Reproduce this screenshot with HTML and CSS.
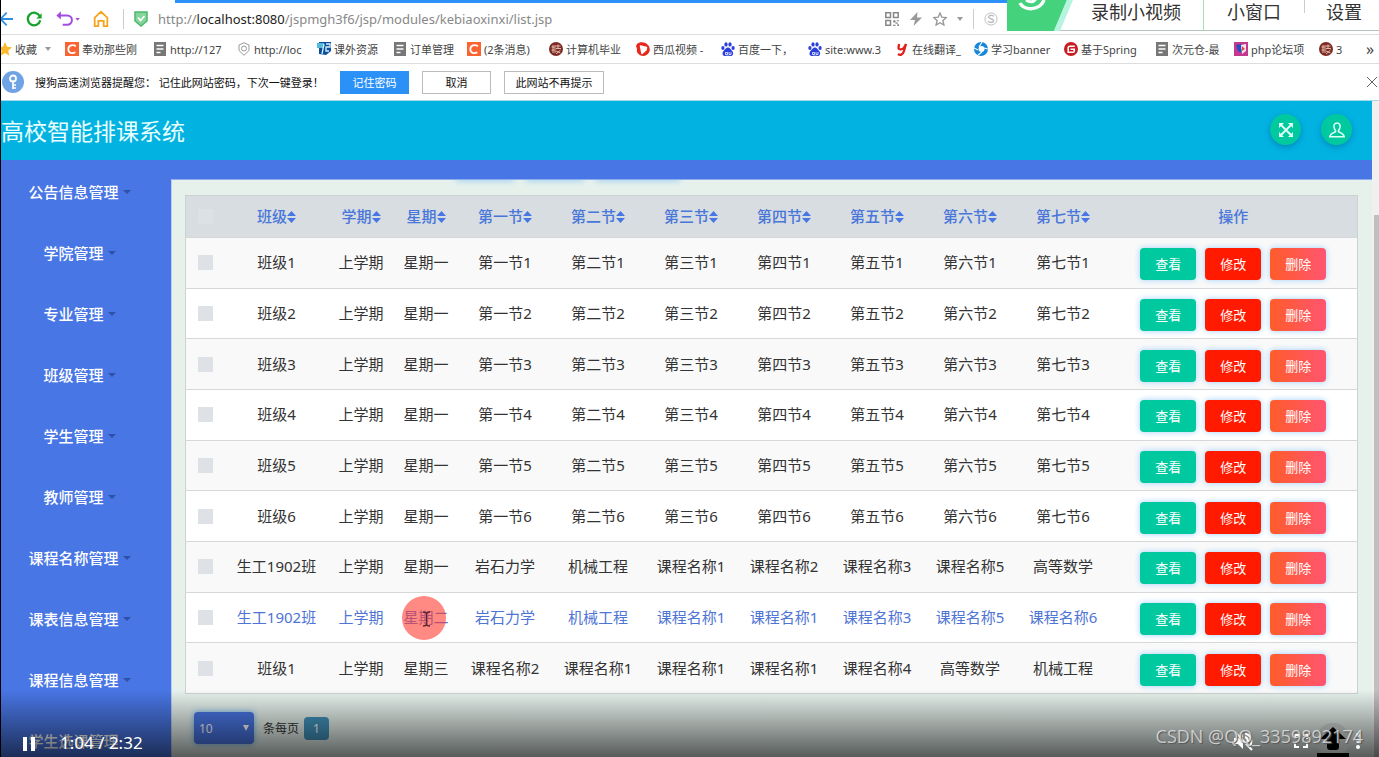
FILE: index.html
```html
<!DOCTYPE html>
<html lang="zh-CN">
<head>
<meta charset="utf-8">
<title>高校智能排课系统</title>
<link rel="stylesheet" href="styles.css">
</head>
<body>
<svg class="defs" aria-hidden="true">
  <symbol id="doc" viewBox="0 0 12 14"><path d="M0 0h12v14H0z" fill="#777"/><path d="M2.500 3.500h7M2.500 7h7M2.500 10.500h4" stroke="#fff" stroke-width="1.300"/></symbol>
  <symbol id="csdn" viewBox="0 0 14 14"><path d="M0 0h14v14H0z" fill="#fa6432"/><path d="M10.800 4.200C8 1.900 3.300 3.300 3.300 7.300c0 3.700 4 4.700 7 2.900" fill="none" stroke="#fff" stroke-width="1.800"/></symbol>
  <symbol id="seal" viewBox="0 0 14 14"><circle cx="7" cy="7" r="7" fill="#7d2a22"/><path d="M2.500 5h3M4 3v8M2.500 8h3M7 4h4.500M9 2.500v4M7 6.500h5M7 9l4.500 2M11.500 8L7 12M6 3v8" stroke="#ecc9bd" stroke-width=".9" fill="none"/></symbol>
  <symbol id="paw" viewBox="0 0 14 14"><g fill="#2a3fdc"><ellipse cx="1.900" cy="6" rx="1.600" ry="2"/><ellipse cx="5" cy="2.400" rx="1.600" ry="2.200"/><ellipse cx="9" cy="2.400" rx="1.600" ry="2.200"/><ellipse cx="12.100" cy="6" rx="1.600" ry="2"/><path d="M7 5.500c2 0 2.700 2 4 3.300 2.200 2.300 1 5.200-1.500 5.200-1.500 0-3.500-.4-5 0-3 .3-3.900-3-2-5C4 7.500 5 5.500 7 5.500z"/></g><path d="M4.500 10.500h2v2h-2zM8 10v2.500h2V10" fill="none" stroke="#fff" stroke-width=".8"/></symbol>
  <symbol id="sort" viewBox="0 0 9 12"><path d="M4.500 0L9 5H0zM4.500 12L0 7h9z" fill="#4976e5"/></symbol>
</svg>

<div class="screen">
  <header class="browser">
    <div class="tab-line"></div>
    <div class="address">
      <svg class="ico" viewBox="0 0 20 20"><path d="M20 10H6M13 3l-7 7 7 7" fill="none" stroke="#2b8fe8" stroke-width="2"/></svg>
      <svg class="ico" viewBox="0 0 20 20"><path d="M16.500 7A7 7 0 1 0 17 11.500" fill="none" stroke="#16a32b" stroke-width="2.500"/><path d="M18.500 3.500v6h-6z" fill="#16a32b"/></svg>
      <svg class="ico undo" viewBox="0 0 28 20"><path d="M3 6h9a4.500 4.500 0 0 1 0 10.500H7" fill="none" stroke="#a34be0" stroke-width="2.200"/><path d="M0 6l5-4.500v9z" fill="#a34be0"/><path d="M21 9h5l-2.500 3z" fill="#a34be0"/></svg>
      <svg class="ico" viewBox="0 0 20 20"><path d="M3 8.500L10 2l7 6.500V18h-4v-6H7v6H3z" fill="none" stroke="#f7a41d" stroke-width="2"/></svg>
      <i class="rule"></i>
      <svg class="ico small" viewBox="0 0 14 16"><path d="M1 1h12v9l-6 5-6-5z" fill="#84d59b" stroke="#4cb96a" stroke-width="1.500"/><path d="M4 6.500l2.500 3 4-4.500" fill="none" stroke="#fff" stroke-width="1.700"/></svg>
      <span class="url">http://<b>localhost:8080</b>/jspmgh3f6/jsp/modules/kebiaoxinxi/list.jsp</span>
      <div class="tools">
        <svg viewBox="0 0 12 12"><g fill="none" stroke="#888" stroke-width="1.300"><path d="M.7.7h4v4h-4zM7.300.7h4v4h-4zM.7 7.300h4v4h-4z"/></g><path d="M7 7h2v2H7zM10 7h2v1h-2zM9 9h2v1H9zM7 11h2v1H7zM10.500 10.500H12V12h-1.500z" fill="#888"/></svg>
        <svg viewBox="0 0 12 14"><path d="M7.500 0L0 8h5l-1.500 6L12 5.500H7z" fill="#999"/></svg>
        <svg viewBox="0 0 14 14"><path d="M7 1l1.800 4.200 4.500.4-3.400 3 1 4.400L7 10.700 3.100 13l1-4.400-3.400-3 4.500-.4z" fill="none" stroke="#999" stroke-width="1.400"/></svg>
        <i class="tri"></i><i class="rule"></i>
        <svg viewBox="0 0 15 15"><circle cx="7.500" cy="7.500" r="6.500" fill="none" stroke="#bbb"/><path d="M10.500 4.500C8.500 3 4.500 3.500 5 5.800c.4 1.800 5.200 1.200 5.300 3.500.1 2-4 2.400-6 .7" fill="none" stroke="#bbb" stroke-width="1.500"/></svg>
        <span>揭秘</span>
      </div>
    </div>
    <nav class="bookmarks">
      <a href="#"><svg viewBox="2 0 11 14"><path d="M6 0l2 4.700 5 .5-3.800 3.500 1.200 5L6 11l-4.400 2.700 1.200-5L-1 5.200l5-.5z" fill="#fdb92c"/></svg>收藏<i class="tri"></i></a>
      <a href="#"><svg><use href="#csdn"/></svg>奉劝那些刚</a>
      <a href="#"><svg><use href="#doc"/></svg>http://127</a>
      <a href="#"><svg viewBox="0 0 14 14"><path d="M7 .7l5 2.300v5.500L7 13.300 2 8.500V3z" fill="none" stroke="#999"/><circle cx="7" cy="6.500" r="2.500" fill="none" stroke="#999"/></svg>http://loc</a>
      <a href="#"><svg viewBox="0 0 14 14"><path d="M2 0h12v9l-5 4-7-1z" fill="#0b4f9b"/><path d="M0 1h7v5H0z" fill="#55b8df"/><path d="M7 2L5 12M9 2h4v3H9v4h3" stroke="#d8f2ff" stroke-width="1.300" fill="none"/></svg>课外资源</a>
      <a href="#"><svg><use href="#doc"/></svg>订单管理</a>
      <a href="#"><svg><use href="#csdn"/></svg>(2条消息)</a>
      <a href="#"><svg><use href="#seal"/></svg>计算机毕业</a>
      <a href="#"><svg viewBox="0 0 14 14"><path d="M1 2c3-3 9-2 11.500 1.500 3 4.500.5 10-5 10.500C2.500 14 0 10 1 7L0 4z" fill="#e8261c"/><path d="M4.500 4l6 1.500-.5 2.500-4 3.500z" fill="#fff" stroke="#fff" stroke-width="1.500" stroke-linejoin="round"/></svg>西瓜视频 -</a>
      <a href="#"><svg><use href="#paw"/></svg>百度一下，</a>
      <a href="#"><svg><use href="#paw"/></svg>site:www.3</a>
      <a href="#"><svg viewBox="0 0 14 14"><path d="M4 2L3.500 6c0 2 4 2 5.500-.5L11 2 9 9c-1 4-4 4.500-6 3" fill="none" stroke="#e0221b" stroke-width="2.300"/></svg>在线翻译_</a>
      <a href="#"><svg viewBox="0 0 14 14"><circle cx="7" cy="7" r="7" fill="#1687d9"/><circle cx="7.500" cy="7" r="3" fill="#fff"/><path d="M5 5L8 0M10 6l4 1M8 10l-4 3M4 8L0 6" stroke="#fff" stroke-width="1.100"/></svg>学习banner</a>
      <a href="#"><svg viewBox="0 0 14 14"><circle cx="7" cy="7" r="7" fill="#c71d23"/><path d="M10.800 4.200H6Q4.200 4.200 4.200 6v4.200H9q1.300 0 1.300-1.300V7.200H6.500" fill="none" stroke="#fff" stroke-width="1.600"/></svg>基于Spring</a>
      <a href="#"><svg><use href="#doc"/></svg>次元仓-最</a>
      <a href="#"><svg viewBox="0 0 14 14"><path d="M0 0h14v14H0z" fill="#c53890"/><path d="M2 3l5-1 1 9-4-2z" fill="#244ec4"/><path d="M7 3l5-1v7l-4 3z" fill="#f5e7f0"/><path d="M8 4l3 3-3 2z" fill="#e34a3a"/></svg>php论坛项</a>
      <a href="#"><svg><use href="#seal"/></svg>3</a>
      <a href="#" class="more">»</a>
    </nav>
    <div class="prompt">
      <svg class="key" viewBox="0 0 22 22"><circle cx="11" cy="11" r="11" fill="#6fa3e6"/><circle cx="11" cy="7.500" r="3" fill="none" stroke="#fff" stroke-width="1.800"/><path d="M11 10.500V18M11 14h3M11 17h3" stroke="#fff" stroke-width="1.700"/></svg>
      <span class="msg">搜狗高速浏览器提醒您： 记住此网站密码，下次一键登录！</span>
      <button class="primary">记住密码</button>
      <button>取消</button>
      <button class="wide">此网站不再提示</button>
      <button class="close" aria-label="关闭"><svg viewBox="0 0 10 10"><path d="M0 0l10 10M10 0L0 10" stroke="#666"/></svg></button>
    </div>
  </header>

  <div class="viewport">
    <div class="site">
      <header class="top">
        <h1>高校智能排课系统</h1>
        <button class="round" aria-label="全屏"><svg viewBox="0 0 16 16"><path d="M2 2l12 12M14 2L2 14" stroke="#e2fff6" stroke-width="1.800"/><path d="M1 6V1h5zM10 1h5v5zM15 10v5h-5zM6 15H1v-5z" fill="#e2fff6"/></svg></button>
        <button class="round" aria-label="用户"><svg viewBox="0 0 16 16"><path d="M8 1C5.500 1 4.700 3 5 5.200c.2 1.500.8 2.500 1.500 3.300v1.300C4 11 1.200 11.500.8 14.700h14.400C14.800 11.500 12 11 9.500 9.800V8.500C10.200 7.700 10.800 6.700 11 5.200 11.300 3 10.500 1 8 1z" fill="none" stroke="#e2fff6" stroke-width="1.500"/></svg></button>
      </header>
      <div class="body">
        <nav class="side">
          <a href="#">公告信息管理<i></i></a>
          <a href="#">学院管理<i></i></a>
          <a href="#">专业管理<i></i></a>
          <a href="#">班级管理<i></i></a>
          <a href="#">学生管理<i></i></a>
          <a href="#">教师管理<i></i></a>
          <a href="#">课程名称管理<i></i></a>
          <a href="#">课表信息管理<i></i></a>
          <a href="#">课程信息管理<i></i></a>
          <a href="#">学生选课管理<i></i></a>
        </nav>
        <main class="content">
          <div class="glow"><i></i><i></i><i></i></div>
          <table>
            <colgroup><col class="c-check"><col class="c-class"><col class="c-term"><col class="c-term"><col class="c-les" span="7"><col class="c-op"></colgroup>
            <thead><tr><th><input type="checkbox" aria-label="全选"></th><th>班级<svg><use href="#sort"/></svg></th><th>学期<svg><use href="#sort"/></svg></th><th>星期<svg><use href="#sort"/></svg></th><th>第一节<svg><use href="#sort"/></svg></th><th>第二节<svg><use href="#sort"/></svg></th><th>第三节<svg><use href="#sort"/></svg></th><th>第四节<svg><use href="#sort"/></svg></th><th>第五节<svg><use href="#sort"/></svg></th><th>第六节<svg><use href="#sort"/></svg></th><th>第七节<svg><use href="#sort"/></svg></th><th>操作</th></tr></thead>
            <tbody>
              <tr><td><input type="checkbox" aria-label="选择"></td><td>班级1</td><td>上学期</td><td>星期一</td><td>第一节1</td><td>第二节1</td><td>第三节1</td><td>第四节1</td><td>第五节1</td><td>第六节1</td><td>第七节1</td><td><div class="ops"><button class="view">查看</button><button class="edit">修改</button><button class="del">删除</button></div></td></tr>
              <tr><td><input type="checkbox" aria-label="选择"></td><td>班级2</td><td>上学期</td><td>星期一</td><td>第一节2</td><td>第二节2</td><td>第三节2</td><td>第四节2</td><td>第五节2</td><td>第六节2</td><td>第七节2</td><td><div class="ops"><button class="view">查看</button><button class="edit">修改</button><button class="del">删除</button></div></td></tr>
              <tr><td><input type="checkbox" aria-label="选择"></td><td>班级3</td><td>上学期</td><td>星期一</td><td>第一节3</td><td>第二节3</td><td>第三节3</td><td>第四节3</td><td>第五节3</td><td>第六节3</td><td>第七节3</td><td><div class="ops"><button class="view">查看</button><button class="edit">修改</button><button class="del">删除</button></div></td></tr>
              <tr><td><input type="checkbox" aria-label="选择"></td><td>班级4</td><td>上学期</td><td>星期一</td><td>第一节4</td><td>第二节4</td><td>第三节4</td><td>第四节4</td><td>第五节4</td><td>第六节4</td><td>第七节4</td><td><div class="ops"><button class="view">查看</button><button class="edit">修改</button><button class="del">删除</button></div></td></tr>
              <tr><td><input type="checkbox" aria-label="选择"></td><td>班级5</td><td>上学期</td><td>星期一</td><td>第一节5</td><td>第二节5</td><td>第三节5</td><td>第四节5</td><td>第五节5</td><td>第六节5</td><td>第七节5</td><td><div class="ops"><button class="view">查看</button><button class="edit">修改</button><button class="del">删除</button></div></td></tr>
              <tr><td><input type="checkbox" aria-label="选择"></td><td>班级6</td><td>上学期</td><td>星期一</td><td>第一节6</td><td>第二节6</td><td>第三节6</td><td>第四节6</td><td>第五节6</td><td>第六节6</td><td>第七节6</td><td><div class="ops"><button class="view">查看</button><button class="edit">修改</button><button class="del">删除</button></div></td></tr>
              <tr><td><input type="checkbox" aria-label="选择"></td><td>生工1902班</td><td>上学期</td><td>星期一</td><td>岩石力学</td><td>机械工程</td><td>课程名称1</td><td>课程名称2</td><td>课程名称3</td><td>课程名称5</td><td>高等数学</td><td><div class="ops"><button class="view">查看</button><button class="edit">修改</button><button class="del">删除</button></div></td></tr>
              <tr class="hover"><td><input type="checkbox" aria-label="选择"></td><td>生工1902班</td><td>上学期</td><td class="pointed">星期二<svg class="pointer" viewBox="0 0 44 44"><circle cx="22" cy="22" r="22" fill="#ff3b30" fill-opacity=".6"/><path d="M21 16q3 0 3.500 1.500Q25 16 28 16M24.500 17v12M21 30q3 0 3.500-1.500Q25 30 28 30" fill="none" stroke="#5a2630" stroke-width="1.300"/></svg></td><td>岩石力学</td><td>机械工程</td><td>课程名称1</td><td>课程名称1</td><td>课程名称3</td><td>课程名称5</td><td>课程名称6</td><td><div class="ops"><button class="view">查看</button><button class="edit">修改</button><button class="del">删除</button></div></td></tr>
              <tr><td><input type="checkbox" aria-label="选择"></td><td>班级1</td><td>上学期</td><td>星期三</td><td>课程名称2</td><td>课程名称1</td><td>课程名称1</td><td>课程名称1</td><td>课程名称4</td><td>高等数学</td><td>机械工程</td><td><div class="ops"><button class="view">查看</button><button class="edit">修改</button><button class="del">删除</button></div></td></tr>
            </tbody>
          </table>
          <div class="pager">
            <div class="size"><select id="size"><option>10</option></select><i></i></div>
            <label for="size">条每页</label>
            <button>1</button>
          </div>
        </main>
      </div>
    </div>
    <div class="scroll"><i></i></div>
  </div>

  <div class="recorder">
    <svg viewBox="0 0 66 31"><path d="M0 0h60L47 31H0z" fill="#45d27c"/><path d="M60 0h6L53 31h-6z" fill="#b5f5e0"/><path d="M13 3c4 8 20 8 24-3" fill="none" stroke="#fff" stroke-width="3.500"/><path d="M19 0q6 4 10-1" fill="none" stroke="#fff" stroke-width="3"/></svg>
    <button class="rec">录制小视频</button><button class="win">小窗口</button><i></i><button class="set">设置</button>
  </div>

  <div class="player">
    <button class="pause" aria-label="暂停"><svg viewBox="0 0 12 14"><path d="M0 0h4v14H0zM8 0h4v14H8z" fill="#fff"/></svg></button>
    <span class="time">1:04 / 2:32</span>
    <div class="right">
      <button aria-label="取消静音"><svg class="mute" viewBox="0 0 20 20"><path d="M1 7v6h4l5 5v-7L6 7zM10 2v5L7.800 4.300z" fill="#fff"/><path d="M12 2.500c7 2 7.500 8 5 12M12 6q3 1 3 5M2 1l17 18" fill="none" stroke="#fff" stroke-width="2"/></svg></button>
      <button aria-label="全屏"><svg class="full" viewBox="0 0 14 14"><path d="M1 5V1h4M9 1h4v4M13 9v4H9M5 13H1V9" fill="none" stroke="#fff" stroke-width="2"/></svg></button>
      <button aria-label="更多"><svg class="dots" viewBox="0 0 4 16"><g fill="#fff"><circle cx="2" cy="2" r="2"/><circle cx="2" cy="8" r="2"/><circle cx="2" cy="14" r="2"/></g></svg></button>
    </div>
  </div>
  <svg class="totop" viewBox="0 0 34 34"><circle cx="17" cy="17" r="17" fill="#777" fill-opacity=".35"/><path d="M17 4l13 12h-7v8q0 3-3 3h-6q-3 0-3-3v-8H4zM1 30h32v4H1z" fill="#000"/></svg>
  <div class="mark">CSDN @QQ_3359892174</div>
</div>
</body>
</html>
```
FILE: styles.css
```css
* { box-sizing: border-box; }
body { margin: 0; font-family: "Noto Sans", "Noto Sans CJK SC", sans-serif; color: #333; }
button { font: inherit; border: 0; padding: 0; background: none; color: inherit; }
a { color: inherit; text-decoration: none; }
svg { flex: none; }
.defs { position: absolute; width: 0; height: 0; }
.screen { position: relative; height: 100vh; min-height: 600px; overflow: hidden; display: flex; flex-direction: column; background: #fff; border-left: 1px solid #000; }

/* browser chrome */
.browser { flex: none; }
.tab-line { height: 3px; margin-left: 174px; background: #2b91f7; }
.address { display: flex; align-items: center; height: 32px; border-bottom: 1px solid #ddd; }
.ico { width: 18px; height: 18px; margin-right: 8px; }
.ico:first-child { margin-left: -6px; margin-right: 12px; }
.undo { width: 28px; margin: 0 9px 0 4px; }
.small { width: 14px; height: 16px; margin: 0 10px 0 10px; }
.rule { width: 1px; height: 20px; margin-left: 5px; background: #ccc; }
.url { font-family: "Open Sans", sans-serif; font-size: 14px; color: #888; white-space: nowrap; }
.url { font-family: "Noto Sans", sans-serif; font-size: 13px; }
.url b { font-weight: 400; color: #222; }
.tools { display: flex; align-items: center; gap: 10px; margin-left: auto; margin-right: 347px; font-size: 12px; color: #999; white-space: nowrap; }
.tools svg { width: 14px; height: 14px; }
.tools .rule { margin: 0; }
.tri { border: 3px solid transparent; border-top: 4px solid #999; border-bottom: 0; }
.bookmarks { display: grid; grid-template-columns: 64fr 88fr 84fr 80fr 76fr 74fr 82fr 87fr 85fr 87fr 87fr 79fr 90fr 91fr 79fr 85fr 47fr 13fr; align-items: center; height: 29px; border-bottom: 1px solid #ddd; font-size: 11px; color: #444; }
.bookmarks a { display: flex; align-items: center; gap: 3px; white-space: nowrap; min-width: 0; }
.bookmarks svg { width: 14px; height: 14px; }
.bookmarks a:first-child svg { width: 11px; }
.bookmarks .tri { margin-left: 5px; }
.bookmarks .more { font-size: 16px; }
.prompt { display: flex; align-items: center; height: 36px; padding-left: 1px; font-size: 11px; color: #111; }
.key { width: 22px; height: 22px; margin-right: 11px; }
.msg { width: 305px; white-space: nowrap; }
.prompt button { width: 69px; height: 23px; margin-right: 13px; border: 1px solid #bbb; background: #fff; }
.prompt .primary { background: #2b91f7; border-color: #2b91f7; color: #fff; }
.prompt .wide { width: 100px; }
.prompt .close { width: 10px; height: 10px; margin: 0 2px 0 auto; border: 0; display: flex; }

/* application */
.viewport { flex: 1; min-height: 0; display: flex; border-top: 1px solid #a5dcec; }
.site { flex: 1; min-width: 0; display: flex; flex-direction: column; background: #4976e5; }
.top { flex: none; display: flex; align-items: center; gap: 20px; height: 59px; padding: 0 20px 2px 0; background: #02b3e2; }
.top h1 { margin: 0 auto 0 0; font-size: 23px; font-weight: 400; color: #eaffff; }
.round { width: 31px; height: 31px; border-radius: 50%; background: #00c9a0; display: flex; align-items: center; justify-content: center; box-shadow: 0 2px 6px rgba(0, 70, 120, .4); }
.round svg { width: 16px; height: 16px; }
.body { flex: 1; min-height: 0; display: flex; }
.side { flex: none; width: 170px; padding: 1px 13px 0 0; }
.side a { display: flex; align-items: center; justify-content: center; gap: 4px; height: 61px; font-size: 15px; font-weight: 500; color: #fff; }
.side i { border: 4px solid transparent; border-top: 4px solid #2f50a8; border-bottom: 0; }
.content { position: relative; flex: 1; min-width: 0; margin-top: 19px; padding: 15px 14px 0 13px; background: #e6f1ec; border-top: 1px solid #8eabf0; border-left: 1px solid #b9cdf0; overflow: hidden; }
.glow { position: absolute; top: -3px; left: 284px; display: flex; gap: 12px; }
.glow i { width: 58px; height: 3px; box-shadow: 0 0 6px #6ab5f2; }
.glow i:last-child { width: 84px; }
table { width: 100%; height: 499px; table-layout: fixed; border-collapse: collapse; border: 1px solid #ccd2d4; background: #fff; font-size: 15px; text-align: center; }
.c-check { width: 39px; }
.c-class { width: 104px; }
.c-term { width: 65px; }
.c-les { width: 93px; }
.c-op { width: 248px; }
th, td { padding: 0 0 2px; white-space: nowrap; }
thead tr { height: 42px; background: #d7dde1; }
th { font-weight: 500; color: #4976d9; }
th svg { width: 9px; height: 12px; vertical-align: -1px; }
tbody tr { border-top: 1px solid #d5d7d9; }
tbody tr:nth-child(odd) { background: #f9f9f9; }
.hover { color: #4e74d4; }
input { appearance: none; display: block; width: 15px; height: 15px; margin: 2px auto 0; background: #dee2e6; }
thead input { background: #dce1e5; }
.ops { display: flex; justify-content: center; gap: 9px; padding-top: 5px; }
.ops button { width: 56px; height: 32px; padding-bottom: 1px; border-radius: 4px; font-size: 13px; color: #fff; box-shadow: 0 0 6px #9fd0fb; }
.ops .view { background: #00c9a0; }
.ops .edit { background: #ff1a00; }
.ops .del { background: linear-gradient(90deg, #ff5c2a, #ff5570); }
.pointed { position: relative; }
.pointer { position: absolute; left: 8px; top: 3px; width: 44px; height: 44px; }
.pager { display: flex; align-items: center; margin: 18px 0 0 9px; font-size: 12px; }
.size { position: relative; width: 60px; }
.size select { appearance: none; display: block; width: 100%; height: 32px; padding: 0 5px; border: 0; border-radius: 4px; background: #4976e5; color: #fff; font: inherit; box-shadow: 0 0 6px #6ab5f2; }
.size i { position: absolute; right: 5px; top: 13px; border: 3px solid transparent; border-top: 6px solid #fff; border-bottom: 0; }
.pager label { margin: 0 5px 0 9px; }
.pager button { width: 25px; height: 23px; border-radius: 4px; background: #4294bd; color: #fff; }
.scroll { width: 7px; padding: 114px 0 0 2px; background: #f0f0f0; display: flex; }
.scroll i { flex: 1; background: #bfbfbf; }

/* floating recorder bar */
.recorder { position: absolute; top: 0; right: 0; display: flex; width: 372px; height: 31px; background: #fff; border-bottom: 1px solid #b5c4bc; font-size: 18px; color: #333; }
.recorder svg { width: 66px; height: 31px; }
.recorder i { width: 1px; height: 13px; background: #ccc; }
.recorder button { display: flex; align-items: flex-start; justify-content: center; line-height: 25px; white-space: nowrap; }
.recorder .rec { width: 131px; padding-right: 4px; border-right: 1px solid #9fe0bb; }
.win { width: 100px; }
.set { flex: 1; }
.recorder .set { justify-content: flex-end; padding-right: 17px; }

/* video controls */
.player { position: absolute; left: 0; right: 0; bottom: 0; display: flex; align-items: flex-end; height: 67px; padding: 0 19px 6px 22px; background: linear-gradient(rgba(0, 0, 0, 0), rgba(0, 0, 0, .62)); color: #fff; }
.pause { display: flex; width: 37px; }
.pause svg { width: 12px; height: 14px; }
.time { font-size: 17px; line-height: 16px; }
.right { display: flex; align-items: center; margin-left: auto; }
.right button { display: flex; }
.mute { width: 20px; height: 20px; margin-right: 41px; }
.full { width: 14px; height: 14px; margin-right: 48px; }
.dots { width: 4px; height: 16px; }
.totop { position: absolute; right: 29px; bottom: 0; width: 34px; height: 34px; }
.mark { position: absolute; right: 16px; bottom: 9px; font: 18px/24px "Open Sans", sans-serif; color: rgba(235, 235, 235, .75); text-shadow: 1px 1px 1px #555; white-space: nowrap; }
```
